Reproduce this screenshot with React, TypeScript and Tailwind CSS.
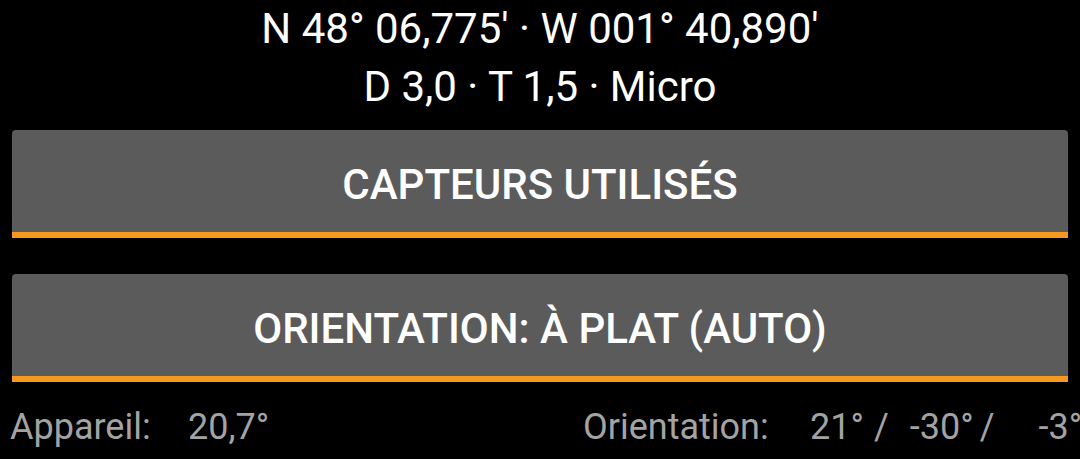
export default function App() {
    const buttons = ["CAPTEURS UTILISÉS", "ORIENTATION: À PLAT (AUTO)"]

    return (
        <div className="w-[1080px] h-[459px] bg-black overflow-hidden" style={{ fontFamily: "Roboto, 'Noto Sans', sans-serif" }}>
            <div className="text-center text-white text-[42px] leading-[58px]">
                <div>N 48° 06,775' · W 001° 40,890'</div>
                <div>D 3,0 · T 1,5 · Micro</div>
            </div>

            <div className="flex flex-col gap-[36px] mx-[12px] mt-[14px]">
                {buttons.map((label) => (
                    <div key={label} className="h-[108px] bg-[#5b5b5c] rounded-t-[4px] border-b-[6px] border-[#f7991e] flex items-center justify-center pt-[8px]">
                        <span className="text-white text-[42px] font-medium leading-none">{label}</span>
                    </div>
                ))}
            </div>

            <div className="flex whitespace-nowrap text-[#a3a3a3] text-[36px] leading-[42px] mt-[24px]">
                <span className="w-[188px] pl-[10px] shrink-0">Appareil:</span>
                <span className="w-[395px] shrink-0">20,7°</span>
                <span className="w-[227px] shrink-0">Orientation:</span>
                <span className="shrink-0">21°</span>
                <span className="ml-[10px] shrink-0">/</span>
                <span className="ml-[21px] shrink-0">-30°</span>
                <span className="ml-[6px] shrink-0">/</span>
                <span className="ml-[44px] shrink-0">-3°</span>
            </div>
        </div>
    )
}
